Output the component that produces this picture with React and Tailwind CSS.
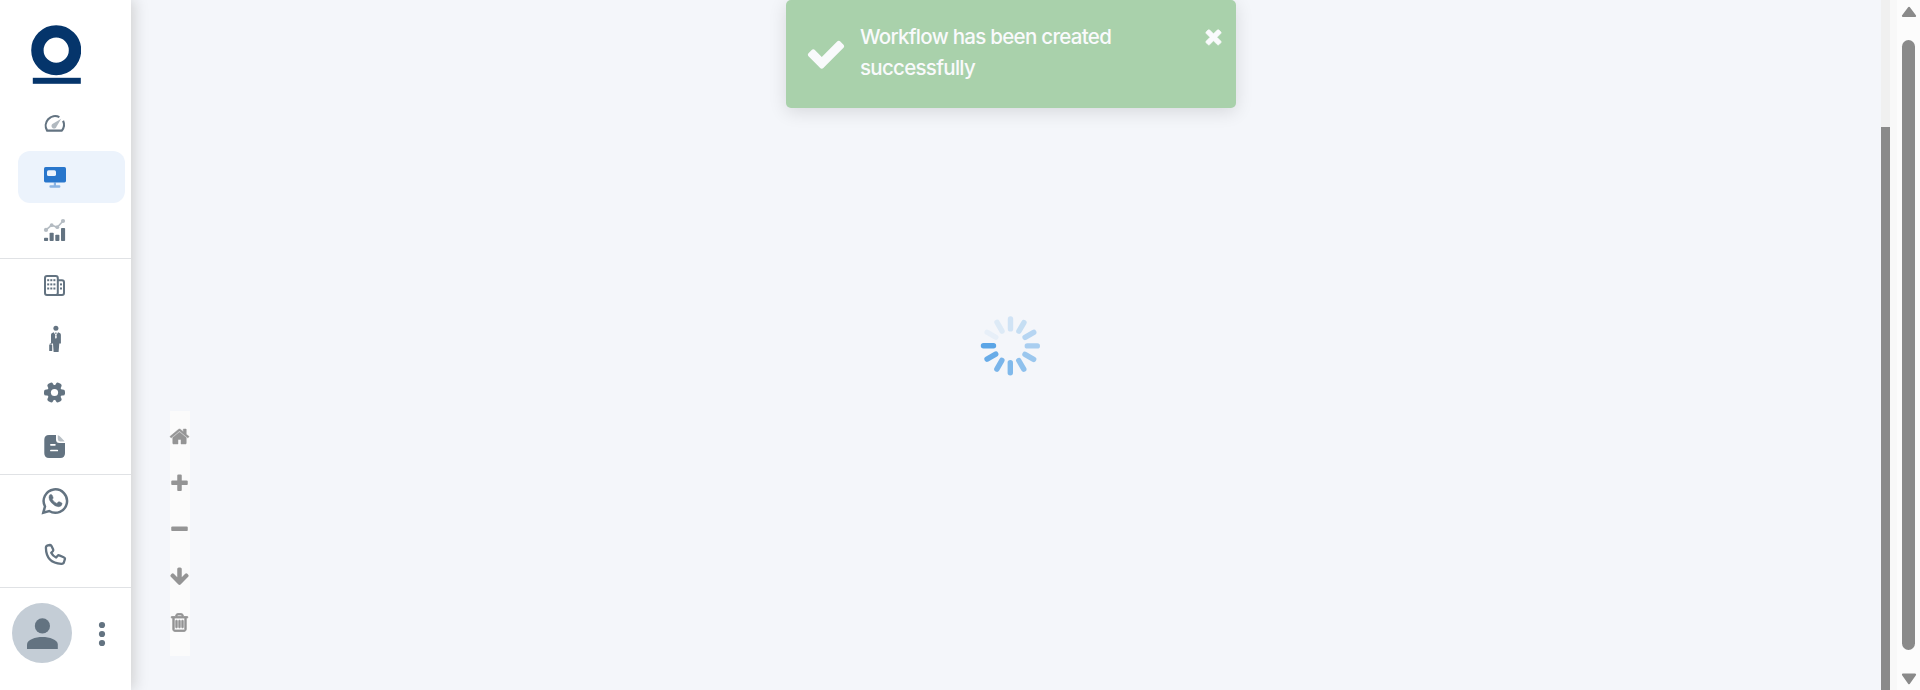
const ICON = '#637381';

const FA = {
  home: 'M1472 992v480q0 26-19 45t-45 19h-384v-384h-256v384h-384q-26 0-45-19t-19-45v-480q0-1 .5-3t.5-3l575-474 575 474q1 2 1 6zm223-69l-62 74q-8 9-21 11h-3q-13 0-21-7l-692-577-692 577q-12 8-24 7-13-2-21-11l-62-74q-8-10-7-23.5t11-21.5l719-599q32-26 76-26t76 26l244 204v-195q0-14 9-23t23-9h192q14 0 23 9t9 23v408l219 182q10 8 11 21.5t-7 23.5z',
  plus: 'M1600 736v192q0 40-28 68t-68 28h-416v416q0 40-28 68t-68 28h-192q-40 0-68-28t-28-68v-416h-416q-40 0-68-28t-28-68v-192q0-40 28-68t68-28h416v-416q0-40 28-68t68-28h192q40 0 68 28t28 68v416h416q40 0 68 28t28 68z',
  minus: 'M1600 736v192q0 40-28 68t-68 28h-1216q-40 0-68-28t-28-68v-192q0-40 28-68t68-28h1216q40 0 68 28t28 68z',
  down: 'M1675 832q0 53-37 90l-651 652q-39 37-91 37-53 0-90-37l-651-652q-38-36-38-90 0-53 38-91l74-75q39-37 91-37 53 0 90 37l294 294v-704q0-52 38-90t90-38h128q52 0 90 38t38 90v704l294-294q37-37 90-37 52 0 91 37l75 75q37 39 37 91z',
  trash: 'M704 736v576q0 14-9 23t-23 9h-64q-14 0-23-9t-9-23v-576q0-14 9-23t23-9h64q14 0 23 9t9 23zm256 0v576q0 14-9 23t-23 9h-64q-14 0-23-9t-9-23v-576q0-14 9-23t23-9h64q14 0 23 9t9 23zm256 0v576q0 14-9 23t-23 9h-64q-14 0-23-9t-9-23v-576q0-14 9-23t23-9h64q14 0 23 9t9 23zm128 724v-948h-896v948q0 22 7 40.5t14.5 27 10.5 8.5h832q3 0 10.5-8.5t14.5-27 7-40.5zm-672-1076h448l-48-117q-7-9-17-11h-317q-10 2-17 11zm928 32v64q0 14-9 23t-23 9h-96v948q0 83-47 143.5t-113 60.5h-832q-66 0-113-58.5t-47-141.5v-952h-96q-14 0-23-9t-9-23v-64q0-14 9-23t23-9h309l70-167q15-37 54-63t79-26h320q40 0 79 26t54 63l70 167h309q14 0 23 9t9 23z',
  check: 'M1671 566q0 40-28 68l-724 724-136 136q-28 28-68 28t-68-28l-136-136-362-362q-28-28-28-68t28-68l136-136q28-28 68-28t68 28l294 295 656-657q28-28 68-28t68 28l136 136q28 28 28 68z',
  times: 'M1490 1322q0 40-28 68l-136 136q-28 28-68 28t-68-28l-294-294-294 294q-28 28-68 28t-68-28l-136-136q-28-28-28-68t28-68l294-294-294-294q-28-28-28-68t28-68l136-136q28-28 68-28t68 28l294 294 294-294q28-28 68-28t68 28l136 136q28 28 28 68t-28 68l-294 294 294 294q28 28 28 68z',
};

const FA_STROKE = { trash: 70, home: 40, times: 50 };

function Fa({ name, className }) {
  return (
    <svg
      viewBox="0 0 1792 1792"
      className={className}
      fill="currentColor"
      stroke="currentColor"
      strokeWidth={FA_STROKE[name] ?? 0}
    >
      <path d={FA[name]} />
    </svg>
  );
}

function NavItem({ className, children }) {
  return (
    <a className={`flex shrink-0 items-center pl-[38px] ${className}`}>
      <svg viewBox="0 0 32 32" className="size-8" fill={ICON}>
        {children}
      </svg>
    </a>
  );
}

function Divider() {
  return <div className="h-px shrink-0 bg-[#e0e2e5]" />;
}

function Sidebar() {
  return (
    <aside className="z-10 flex h-full w-[131px] shrink-0 flex-col bg-white shadow-[3px_0_14px_rgba(30,22,0,0.17)]">
      <div className="h-[97px] shrink-0 pl-[31px] pt-[25px]">
        <svg viewBox="0 0 50 60" className="h-[60px] w-[50px]">
          <circle cx="25.2" cy="25.2" r="18.8" fill="none" stroke="#05356b" strokeWidth="12.4" />
          <rect x="1.8" y="52.8" width="48" height="6" fill="#05356b" />
        </svg>
      </div>
      <NavItem className="h-[54px]">
        <path d="M21.4 9.1A9.5 9.5 0 0 0 9.1 22.6H23.9A9.6 9.6 0 0 0 25.1 12.8" fill="none" stroke={ICON} strokeWidth="2.1" strokeLinejoin="round" />
        <path d="M23.2 10.8L18.6 18.6A2.6 2.6 0 1 1 14.8 15.7Z" opacity=".5" />
      </NavItem>
      <div className="ml-[18px] mr-1.5 flex h-[52px] shrink-0 items-center rounded-xl bg-[#ecf3fc] pl-5">
        <svg viewBox="0 0 32 32" className="size-8" fill="#2876cc">
          <path d="M15.8 21.4h2.2v2.9h3.2a1.2 1.2 0 0 1 0 2.4h-8.6a1.2 1.2 0 0 1 0-2.4h3.2z" opacity=".5" />
          <rect x="6" y="6" width="22" height="15.4" rx="1.6" />
          <rect x="9" y="9.2" width="9" height="5.8" rx="1.6" fill="#ecf3fc" />
        </svg>
      </div>
      <NavItem className="h-[55px] pb-px">
        <g opacity=".48">
          <path d="M8 15.8L13.7 11.2L19.3 13.2L25 7" fill="none" stroke={ICON} strokeWidth="1.6" />
          <circle cx="8" cy="15.9" r="2.1" />
          <circle cx="13.7" cy="11.2" r="1.9" />
          <circle cx="19.3" cy="13.2" r="1.9" />
          <circle cx="25" cy="7" r="2.1" />
        </g>
        <rect x="6" y="23.8" width="4.1" height="3.2" rx=".8" />
        <rect x="11.6" y="18.8" width="4.1" height="8.2" rx=".8" />
        <rect x="17.3" y="20.8" width="4.1" height="6.2" rx=".8" />
        <rect x="23" y="14" width="4.1" height="13" rx=".8" />
      </NavItem>
      <Divider />
      <NavItem className="h-[54px]">
        <rect x="7" y="6.1" width="12.8" height="19" rx="2" fill="none" stroke={ICON} strokeWidth="2" />
        <path d="M19.8 10.2H24a2 2 0 0 1 2 2V23a2 2 0 0 1-2 2H18" fill="none" stroke={ICON} strokeWidth="2" />
        {[10.2, 14.4, 18.5].map((y) => (
          <g key={y}>
            <rect x="9.2" y={y - 1} width="2" height="2" />
            <rect x="12.3" y={y - 1} width="2" height="2" />
            <rect x="15.4" y={y - 1} width="2" height="2" />
          </g>
        ))}
        <rect x="22" y="13.4" width="2" height="2" />
        <rect x="22" y="17.5" width="2" height="2" />
      </NavItem>
      <NavItem className="h-[52px]">
        <circle cx="17.9" cy="5.3" r="2.5" />
        <path d="M15.7 9.2L17.4 12L17 14.2L17.9 16L18.8 14.2L18.4 12L20.1 9.2L22.2 10.2Q22.9 10.7 22.9 12V20.6H21.3L20.6 29H15.6L15 20.6H13V12Q13 10.7 13.7 10.2Z" />
        <path d="M17.4 9.5h1l.3.7-.5.8h-.6l-.5-.8z" />
        <rect x="11.2" y="21.5" width="3" height="6.6" rx=".4" />
        <path d="M12.2 21.6V20.6H14" fill="none" stroke={ICON} strokeWidth=".7" />
      </NavItem>
      <NavItem className="h-[54px]">
        {[0, 60, 120].map((angle) => (
          <rect key={angle} x="6" y="13.4" width="21" height="6.2" rx="2.2" transform={`rotate(${angle} 16.5 16.5)`} />
        ))}
        <circle cx="16.5" cy="16.5" r="7.6" />
        <circle cx="16.5" cy="16.5" r="3.6" fill="#fff" />
      </NavItem>
      <NavItem className="h-[55px] pb-px">
        <path d="M11 5H18V9.5Q18 13 21.5 13H27V23.2Q27 28 22.2 28H11.1Q6.3 28 6.3 23.2V9.8Q6.3 5 11 5Z" />
        <path d="M19.8 5.3Q21 5.4 22.6 7.1L25.4 10Q26.3 11 26.4 11.4H22.1Q19.8 11.4 19.8 9.1Z" opacity=".45" />
        <path d="M12.9 14.8H16.9M12.9 20.5H19.3" stroke="#fff" strokeWidth="1.7" strokeLinecap="round" />
      </NavItem>
      <Divider />
      <NavItem className="h-[52px]">
        <path d="M5.3 27.6L7 21.5A11.7 11.7 0 1 1 11.2 26Z" fill="none" stroke={ICON} strokeWidth="2.5" />
        <path d="M11.9 9.8Q13.6 8.8 14.3 10.4L15.1 12.5Q15.3 13.3 14.3 14.4Q15.7 17.1 18.9 18.5L20.2 17Q20.7 16.5 21.4 16.8L23.5 17.8Q24.2 18.2 24 19Q23.4 21.8 20.4 21.7Q16.6 21.3 13.4 17.7Q10.8 14.8 11 12.4Q11.1 10.6 11.9 9.8Z" stroke={ICON} strokeWidth=".5" />
      </NavItem>
      <NavItem className="h-[60px] pb-1.5">
        <path d="M9.8 7.4L12 7Q13 6.9 13.5 7.9L15.2 11.6Q15.5 12.5 14.8 13.2L13.2 14.8Q14.6 17.9 18.1 19.5L19.7 17.7Q20.3 17 21.2 17.4L25.1 19Q27.3 19.9 26.9 21.2L26 24Q25.6 25.9 23.3 25.8Q8.2 25.2 7.9 9.8Q7.9 7.9 9.8 7.4Z" fill="none" stroke={ICON} strokeWidth="2.3" strokeLinejoin="round" />
      </NavItem>
      <Divider />
      <div className="flex pl-3 pt-[15px]">
        <div className="size-[60px] rounded-full bg-[#c4cdd6]">
          <svg viewBox="0 0 60 60" className="size-[60px]" fill={ICON}>
            <circle cx="30.4" cy="22.9" r="7.6" />
            <path d="M15 46V41.5C15 36.6 23.5 34 30.4 34S45.8 36.6 45.8 41.5V46Z" />
          </svg>
        </div>
        <svg viewBox="0 0 8 60" className="ml-[26px] h-[60px] w-2" fill={ICON}>
          <circle cx="4" cy="22" r="3.1" />
          <circle cx="4" cy="31" r="3.1" />
          <circle cx="4" cy="40" r="3.1" />
        </svg>
      </div>
    </aside>
  );
}

const SPOKES = [1, 0.92, 0.8, 0.76, 0.66, 0.58, 0.49, 0.4, 0.3, 0.23, 0.15, 0.08];

function Spinner() {
  return (
    <svg viewBox="-32 -32 64 64" className="size-16">
      {SPOKES.map((opacity, i) => (
        <rect key={i} x="-29.6" y="-2.8" width="15.4" height="5.4" rx="2.7" fill="#5ba5e6" opacity={opacity} transform={`translate(.4 -.2) rotate(${-30 * i})`} />
      ))}
    </svg>
  );
}

function Toast() {
  return (
    <div className="absolute left-[655px] top-0 flex h-[108px] w-[450px] rounded-[5px] bg-[#a9d1ab] font-['Inter',sans-serif] text-[#f9fafc] shadow-[0_4px_18px_rgba(0,0,0,0.12)]">
      <Fa name="check" className="ml-[19px] mt-[33px] size-[42px] shrink-0" />
      <p className="ml-[13px] mt-[21px] w-[300px] text-[20.5px] font-medium leading-[31px] tracking-[-0.71px]">
        Workflow has been created successfully
      </p>
      <Fa name="times" className="ml-auto mr-[11px] mt-[24.5px] size-[23px] shrink-0" />
    </div>
  );
}

function CanvasTools() {
  return (
    <div className="absolute left-[39px] top-[411px] flex h-[245px] w-5 flex-col items-start gap-[25.6px] bg-[#fbfbfb] pt-[15px] text-[#959595]">
      {['home', 'plus', 'minus', 'down', 'trash'].map((name) => (
        <Fa key={name} name={name} className="-ml-[0.8px] size-[21px] shrink-0" />
      ))}
    </div>
  );
}

export default function App() {
  return (
    <div className="flex h-[690px] w-full overflow-hidden bg-[#f4f6fa]">
      <Sidebar />
      <main className="relative flex flex-1 items-center justify-center pl-2 pt-px">
        <CanvasTools />
        <Spinner />
        <Toast />
      </main>
      <div className="w-[9px] shrink-0 bg-[#f0f0f0] pt-[127px]">
        <div className="h-full bg-[#8a8a8a]" />
      </div>
      <div className="w-[7px] shrink-0 bg-[#f8f8f8]" />
      <div className="flex w-[23px] shrink-0 flex-col items-center bg-[#fcfcfc]">
        <svg viewBox="0 0 16 40" className="h-10 w-4 shrink-0">
          <path d="M8 7.8L14 16H2Z" fill="#8a8a8a" stroke="#8a8a8a" strokeWidth="2.2" strokeLinejoin="round" />
        </svg>
        <div className="h-[610px] w-[13px] shrink-0 rounded-full bg-[#8a8a8a]" />
        <svg viewBox="0 0 16 40" className="h-10 w-4 shrink-0">
          <path d="M8 33L14 24.6H2Z" fill="#8a8a8a" stroke="#8a8a8a" strokeWidth="2.2" strokeLinejoin="round" />
        </svg>
      </div>
    </div>
  );
}
